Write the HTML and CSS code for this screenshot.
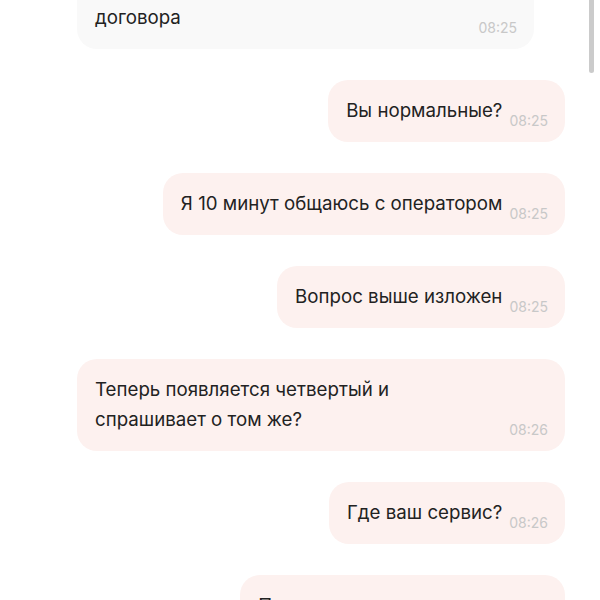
FILE: index.html
```html
<!DOCTYPE html>
<html lang="ru">
<head>
<meta charset="UTF-8">
<meta name="viewport" content="width=device-width, initial-scale=1.0">
<title>Чат поддержки</title>
<link rel="stylesheet" href="styles.css">
</head>
<body>
<div class="chat">
  <div class="messages">
    <div class="msg in">
      <div class="text">Уточните, пожалуйста, номер вашего договора</div>
      <div class="time">08:25</div>
    </div>
    <div class="msg out">
      <div class="text">Вы нормальные?</div>
      <div class="time">08:25</div>
    </div>
    <div class="msg out">
      <div class="text">Я 10 минут общаюсь с оператором</div>
      <div class="time">08:25</div>
    </div>
    <div class="msg out">
      <div class="text">Вопрос выше изложен</div>
      <div class="time">08:25</div>
    </div>
    <div class="msg out">
      <div class="text">Теперь появляется четвертый и спрашивает о том же?</div>
      <div class="time">08:26</div>
    </div>
    <div class="msg out">
      <div class="text">Где ваш сервис?</div>
      <div class="time">08:26</div>
    </div>
    <div class="msg out">
      <div class="text">Почему никто не отвечает</div>
      <div class="time">08:26</div>
    </div>
  </div>
  <div class="scrollbar"></div>
</div>
</body>
</html>
```

FILE: styles.css
```css
body {
  margin: 0;
  background: #fff;
  font-family: Inter, "Noto Sans", sans-serif;
  color: #222;
  overflow: hidden;
}
.chat {
  position: relative;
  height: 600px;
  overflow: hidden;
}
.messages {
  display: flex;
  flex-direction: column;
  gap: 31px;
  padding: 0 35px 0 77px;
  margin-top: -43px;
}
.msg {
  display: flex;
  align-items: flex-end;
  gap: 7px;
  max-width: 488px;
  box-sizing: border-box;
  padding: 16px 17px 16px 18px;
  border-radius: 20px;
}
.msg.in {
  align-self: flex-start;
  max-width: 457px;
  background: #f9f9f9;
}
.msg.out {
  align-self: flex-end;
  background: #fdf1ef;
}
.text {
  font-size: 18.7px;
  line-height: 30px;
}
.time {
  font-size: 14px;
  line-height: 16px;
  color: #c8c8c8;
  margin-bottom: -3px;
  white-space: nowrap;
}
.scrollbar {
  position: absolute;
  top: -10px;
  right: 6px;
  width: 5px;
  height: 83px;
  border-radius: 3px;
  background: #cbcbcb;
}
```
